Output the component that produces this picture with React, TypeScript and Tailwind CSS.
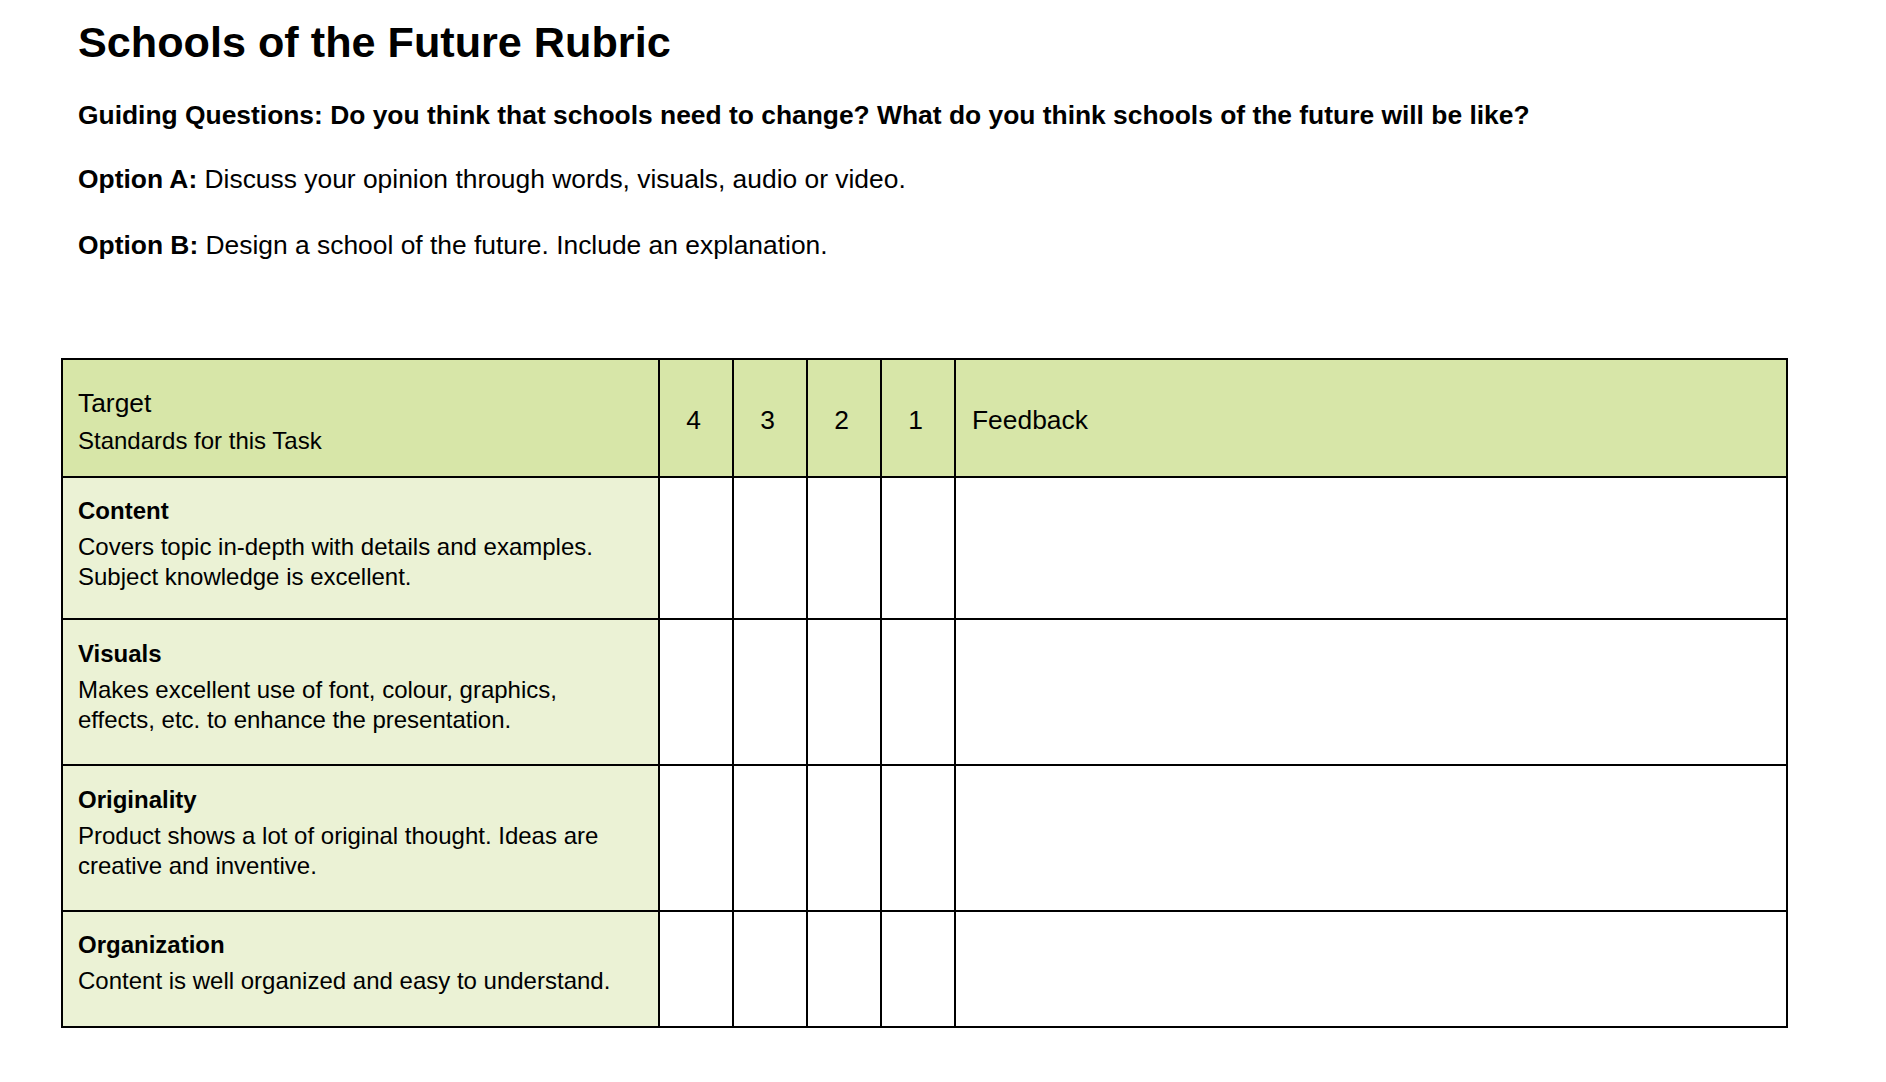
const rows = [
  {
    title: "Content",
    lines: ["Covers topic in-depth with details and examples.", "Subject knowledge is excellent."],
    h: "h-[142px]",
    pt: "pt-[18px]",
  },
  {
    title: "Visuals",
    lines: ["Makes excellent use of font, colour, graphics,", "effects, etc. to enhance the presentation."],
    h: "h-[146px]",
    pt: "pt-[19px]",
  },
  {
    title: "Originality",
    lines: ["Product shows a lot of original thought. Ideas are", "creative and inventive."],
    h: "h-[146px]",
    pt: "pt-[19px]",
  },
  {
    title: "Organization",
    lines: ["Content is well organized and easy to understand."],
    h: "h-[116px]",
    pt: "pt-[18px]",
  },
];

const scores = ["4", "3", "2", "1"];

export default function App() {
  return (
    <div
      className="min-h-screen bg-white text-black"
      style={{ fontFamily: '"Liberation Sans", Arial, sans-serif' }}
    >
      <div className="pl-[78px] pt-[18px]">
        <h1 className="text-[43.2px] leading-[49px] font-bold">Schools of the Future Rubric</h1>
        <p className="mt-[33px] text-[26.4px] leading-[30px] font-bold">
          Guiding Questions: Do you think that schools need to change? What do you think schools of the
          future will be like?
        </p>
        <p className="mt-[34px] text-[26.4px] leading-[30px]">
          <b>Option A:</b> Discuss your opinion through words, visuals, audio or video.
        </p>
        <p className="mt-[36px] text-[26.4px] leading-[30px]">
          <b>Option B:</b> Design a school of the future. Include an explanation.
        </p>
      </div>

      <div className="ml-[61px] mt-[98px] w-[1727px] grid grid-cols-[597px_74px_74px_74px_74px_1fr] border-l-2 border-t-2 border-black">
        {/* header */}
        <div className="h-[118px] bg-[#d7e6a8] border-r-2 border-b-2 border-black pl-[15px] pt-[28px]">
          <div className="text-[26.4px] leading-[30px]">Target</div>
          <div className="mt-[9px] text-[24px] leading-[28px]">Standards for this Task</div>
        </div>
        {scores.map((s) => (
          <div
            key={s}
            className="h-[118px] bg-[#d7e6a8] border-r-2 border-b-2 border-black flex items-center justify-center pr-[5px] pt-[5px] text-[26.4px]"
          >
            {s}
          </div>
        ))}
        <div className="h-[118px] bg-[#d7e6a8] border-r-2 border-b-2 border-black flex items-center pl-[16px] pt-[5px] text-[26.4px]">
          Feedback
        </div>

        {rows.map((r) => (
          <div key={r.title} className="contents">
            <div className={`${r.h} ${r.pt} bg-[#ebf2d5] border-r-2 border-b-2 border-black pl-[15px]`}>
              <div className="text-[24px] leading-[30px] font-bold">{r.title}</div>
              <div className="mt-[6px] text-[24px] leading-[30px]">
                {r.lines.map((l) => (
                  <div key={l}>{l}</div>
                ))}
              </div>
            </div>
            {scores.map((s) => (
              <div key={s} className={`${r.h} border-r-2 border-b-2 border-black`} />
            ))}
            <div className={`${r.h} border-r-2 border-b-2 border-black`} />
          </div>
        ))}
      </div>
    </div>
  );
}
